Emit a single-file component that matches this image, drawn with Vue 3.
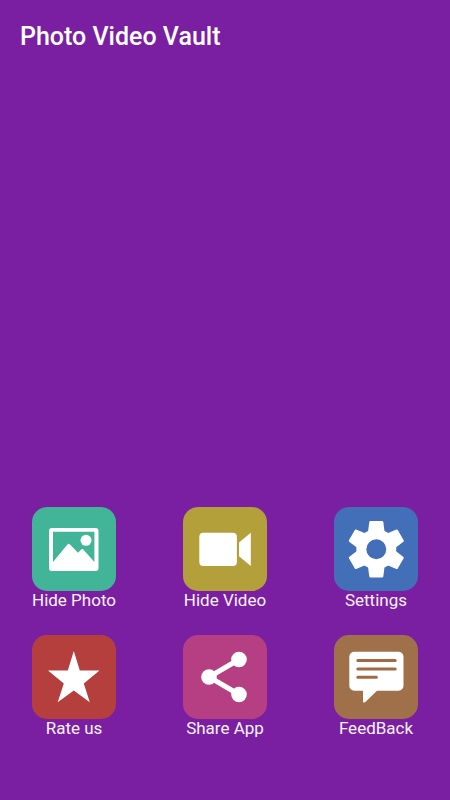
<script setup>
const actions = [
  { id: 'photo', label: 'Hide Photo' },
  { id: 'video', label: 'Hide Video' },
  { id: 'settings', label: 'Settings' },
  { id: 'rate', label: 'Rate us' },
  { id: 'share', label: 'Share App' },
  { id: 'feedback', label: 'FeedBack' },
]
const teeth = [0, 60, 120, 180, 240, 300]
</script>

<template>
  <div class="screen">
    <header class="bar">
      <h1 class="title">Photo Video Vault</h1>
    </header>
    <main class="actions">
      <button v-for="a in actions" :key="a.id" type="button" class="action">
        <svg class="tile" :class="a.id" viewBox="0 0 84 84" aria-hidden="true">
          <template v-if="a.id === 'photo'">
            <path
              fill-rule="evenodd"
              d="M20 21H63.5a3 3 0 0 1 3 3V61a3 3 0 0 1-3 3H20a3 3 0 0 1-3-3V24a3 3 0 0 1 3-3ZM21 24.8V55L35.4 37.5Q36.7 36 38 37.5L46 45.7L49.2 42.5Q50.4 41.5 51.5 42.7L62.4 55V24.8Z"
            />
            <circle cx="54" cy="33.3" r="5.5" />
          </template>
          <template v-else-if="a.id === 'video'">
            <rect x="16.3" y="25.7" width="37.6" height="33.3" rx="4" />
            <path d="M56 35.5L67.8 25.7V59L56 49.3Z" />
          </template>
          <template v-else-if="a.id === 'settings'">
            <path
              fill-rule="evenodd"
              d="M42.3 22.3a20 20 0 1 0 0 40a20 20 0 1 0 0-40ZM42.3 32.3a10 10 0 1 1 0 20a10 10 0 1 1 0-20Z"
            />
            <path
              v-for="t in teeth"
              :key="t"
              d="M33.9 25.8L35.3 15Q35.5 14.1 36.4 14.1H48.2Q49.1 14.1 49.3 15L50.7 25.8L42.3 28Z"
              :transform="`rotate(${t} 42.3 42.3)`"
            />
          </template>
          <path
            v-else-if="a.id === 'rate'"
            d="M41.8 16L47.8 35.5H67.5L51.8 48.5L57.8 67.2L41.8 55.5L25.7 67.2L31.8 48.5L16 35.5H35.8Z"
          />
          <template v-else-if="a.id === 'share'">
            <path class="link" d="M56 24.5L26 42L56 59.5" />
            <circle cx="26" cy="42" r="7.8" />
            <circle cx="56" cy="24.5" r="7.8" />
            <circle cx="56" cy="59.5" r="7.8" />
          </template>
          <template v-else>
            <path
              d="M20.3 16.7H64.5a5 5 0 0 1 5 5V50.7a5 5 0 0 1-5 5H43L31.4 67Q29 68.6 29 66V55.7H20.3a5 5 0 0 1-5-5V21.7a5 5 0 0 1 5-5Z"
            />
            <path class="lines" d="M23.8 25.4H61.2M23.8 34H61.2M23.8 42.2H42.4" />
          </template>
        </svg>
        <span class="label">{{ a.label }}</span>
      </button>
    </main>
  </div>
</template>

<style>
body {
  margin: 0;
  background: #7b1fa2;
}
</style>

<style scoped>
.screen {
  box-sizing: border-box;
  min-height: 100vh;
  display: flex;
  flex-direction: column;
  justify-content: space-between;
  background: #7b1fa2;
  color: #fff;
  font-family: Roboto, "Liberation Sans", sans-serif;
}
.bar {
  padding: 20px;
}
.title {
  margin: 0;
  font-size: 25px;
  font-weight: 500;
  line-height: 34px;
}
.actions {
  display: grid;
  grid-template-columns: repeat(3, 84px);
  justify-content: space-between;
  row-gap: 26px;
  padding: 0 32px 63px;
}
.action {
  display: flex;
  flex-direction: column;
  align-items: center;
  padding: 0;
  border: 0;
  background: none;
  color: #faf3fc;
  font: inherit;
  cursor: pointer;
}
.tile {
  width: 84px;
  height: 84px;
  border-radius: 15px;
  fill: #fff;
}
.photo { background: #42b599; }
.video { background: #b3a03b; }
.settings { background: #426fb8; }
.rate { background: #b53f3d; }
.share { background: #b63f84; }
.feedback { background: #a0704a; }
.link {
  fill: none;
  stroke: #fff;
  stroke-width: 5;
}
.lines {
  fill: none;
  stroke: #a06a45;
  stroke-width: 3;
  stroke-linecap: round;
}
.label {
  font-size: 17px;
  line-height: 18px;
  white-space: nowrap;
}
</style>
